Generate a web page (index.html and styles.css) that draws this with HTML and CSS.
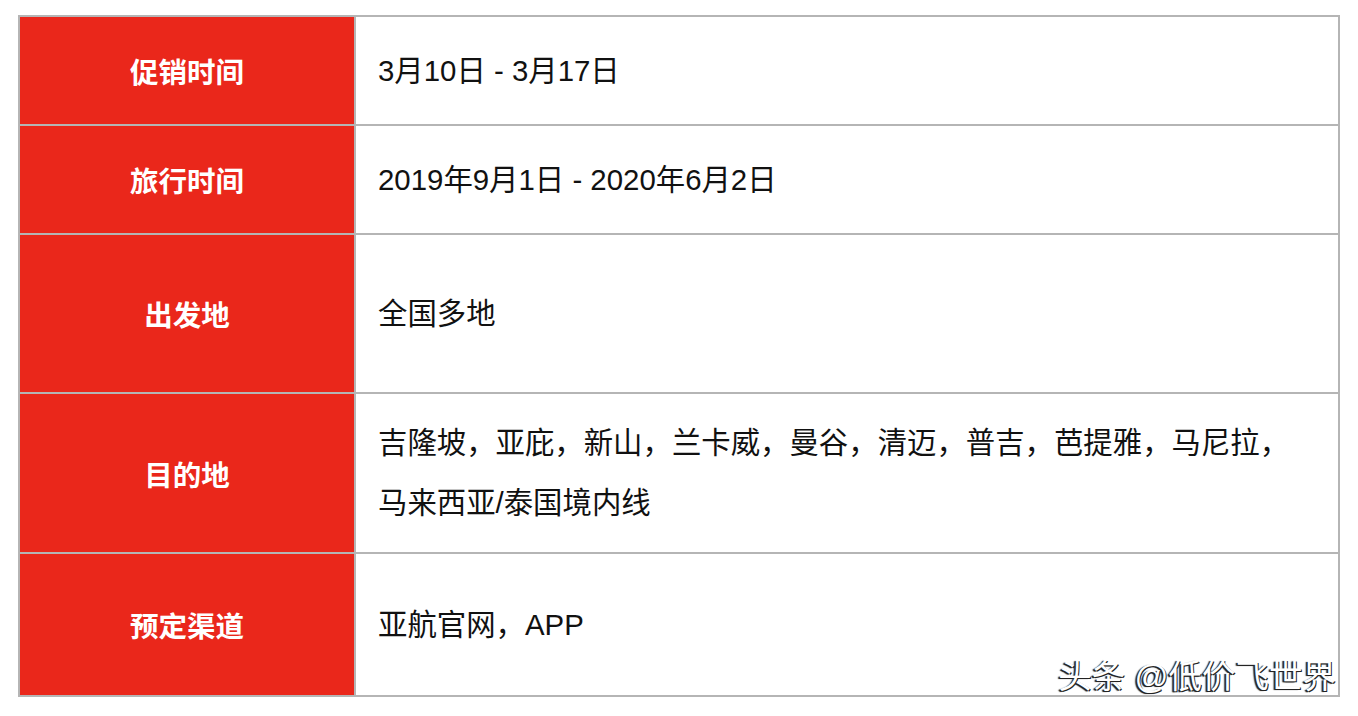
FILE: index.html
```html
<!DOCTYPE html>
<html lang="zh-CN">
<head>
<meta charset="utf-8">
<link rel="stylesheet" href="styles.css">
</head>
<body>
<div class="wrap">
  <table class="promo">
    <tr class="r1"><th>促销时间</th><td>3月10日 - 3月17日</td></tr>
    <tr class="r2"><th>旅行时间</th><td>2019年9月1日 - 2020年6月2日</td></tr>
    <tr class="r3"><th>出发地</th><td>全国多地</td></tr>
    <tr class="r4"><th>目的地</th><td class="multi">吉隆坡，亚庇，新山，兰卡威，曼谷，清迈，普吉，芭提雅，马尼拉，马来西亚/泰国境内线</td></tr>
    <tr class="r5"><th>预定渠道</th><td>亚航官网，APP</td></tr>
  </table>
  <div class="mark">头条 @低价飞世界</div>
</div>
</body>
</html>
```
FILE: styles.css
```css
html, body {
  margin: 0;
  padding: 0;
  background: #ffffff;
}
body {
  font-family: "Liberation Sans", "Noto Sans CJK SC", sans-serif;
}
.wrap {
  position: relative;
  width: 1358px;
  height: 716px;
  padding: 15px 0 0 18px;
  box-sizing: border-box;
}
.promo {
  border-collapse: collapse;
  width: 1322px;
  table-layout: fixed;
}
.promo th, .promo td {
  border: 2px solid #b5b5b5;
  padding: 0;
  vertical-align: middle;
}
.promo th {
  width: 334px;
  background: #ea271b;
  color: #ffffff;
  font-family: "Noto Sans CJK SC", sans-serif;
  font-weight: 600;
  font-size: 28.5px;
  text-align: center;
}
.promo td {
  background: #ffffff;
  color: #111111;
  font-size: 29.4px;
  text-align: left;
  padding: 0 40px 0 22px;
  line-height: 60px;
}
.r1, .r2 { height: 109px; }
.r3 { height: 159px; }
.r4 { height: 160px; }
.r5 { height: 143px; }
.mark {
  position: absolute;
  right: 22px;
  top: 654px;
  font-family: "Liberation Sans", "Noto Sans CJK SC", sans-serif;
  font-size: 33.5px;
  color: #ffffff;
  text-shadow: -1px 1px 0 #222, 1px 1px 0 #222, -2px 1px 1px #333;
  line-height: 46px;
}
```
